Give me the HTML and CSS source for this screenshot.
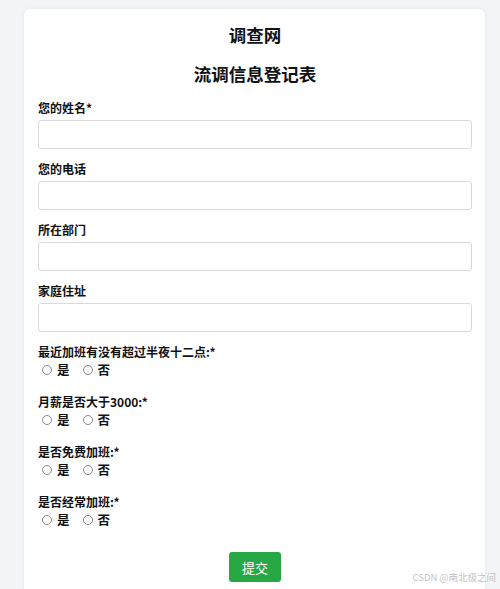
FILE: index.html
```html
<!DOCTYPE html>
<html lang="zh-CN">
<head>
<meta charset="utf-8">
<title>流调信息登记表</title>
<link rel="stylesheet" href="styles.css">
</head>
<body>
<div class="card">
  <h1 class="site">调查网</h1>
  <h2 class="form-title">流调信息登记表</h2>
  <form class="form">
    <div class="field">
      <label class="label">您的姓名*</label>
      <input class="text-input" type="text">
    </div>
    <div class="field">
      <label class="label">您的电话</label>
      <input class="text-input" type="text">
    </div>
    <div class="field">
      <label class="label">所在部门</label>
      <input class="text-input" type="text">
    </div>
    <div class="field">
      <label class="label">家庭住址</label>
      <input class="text-input" type="text">
    </div>
    <div class="question">
      <div class="label">最近加班有没有超过半夜十二点:*</div>
      <div class="options">
        <label class="option"><input class="radio" type="radio" name="q1">是</label>
        <label class="option"><input class="radio" type="radio" name="q1">否</label>
      </div>
    </div>
    <div class="question">
      <div class="label">月薪是否大于3000:*</div>
      <div class="options">
        <label class="option"><input class="radio" type="radio" name="q2">是</label>
        <label class="option"><input class="radio" type="radio" name="q2">否</label>
      </div>
    </div>
    <div class="question">
      <div class="label">是否免费加班:*</div>
      <div class="options">
        <label class="option"><input class="radio" type="radio" name="q3">是</label>
        <label class="option"><input class="radio" type="radio" name="q3">否</label>
      </div>
    </div>
    <div class="question">
      <div class="label">是否经常加班:*</div>
      <div class="options">
        <label class="option"><input class="radio" type="radio" name="q4">是</label>
        <label class="option"><input class="radio" type="radio" name="q4">否</label>
      </div>
    </div>
    <div class="actions">
      <button class="submit" type="button">提交</button>
    </div>
  </form>
</div>
<div class="watermark">CSDN @南北极之间</div>
</body>
</html>
```

FILE: styles.css
```css
html, body {
  margin: 0;
  padding: 0;
}
body {
  background: #f2f4f7;
  font-family: "Noto Sans CJK SC", "Noto Sans", sans-serif;
  color: #111;
  height: 589px;
  overflow: hidden;
  position: relative;
}
.card {
  margin: 9px 0 0 24px;
  width: 461px;
  height: 600px;
  box-sizing: border-box;
  background: #fff;
  border-radius: 6px;
  box-shadow: 0 0 4px rgba(0, 0, 0, 0.06);
  padding: 14px 13px 0 14px;
}
.site, .form-title {
  margin: 0;
  text-align: center;
  font-size: 17.5px;
  line-height: 24px;
  font-weight: 700;
}
.form-title {
  margin-top: 15px;
}
.form {
  margin-top: 13px;
  display: flex;
  flex-direction: column;
}
.field {
  display: flex;
  flex-direction: column;
  margin-bottom: 11px;
}
.label {
  display: block;
  font-size: 12px;
  line-height: 18px;
  font-weight: 700;
  color: #111;
}
.text-input {
  margin-top: 3px;
  height: 29px;
  box-sizing: border-box;
  border: 1px solid #d9d9d9;
  border-radius: 3px;
  background: #fff;
  padding: 0 8px;
  outline: none;
}
.question {
  margin-bottom: 14px;
}
.options {
  display: flex;
  height: 18px;
  align-items: center;
  padding-left: 3px;
}
.option {
  display: flex;
  align-items: center;
  font-size: 12.5px;
  font-weight: 700;
  line-height: 18px;
  margin-right: 12px;
}
.radio {
  appearance: none;
  -webkit-appearance: none;
  width: 10px;
  height: 10px;
  margin: 0 5px 0 1px;
  border: 1px solid #8a8a8a;
  border-radius: 50%;
  background: #fff;
  box-sizing: border-box;
}
.actions {
  display: flex;
  justify-content: center;
  margin-top: 9px;
}
.submit {
  width: 52px;
  height: 30px;
  border: none;
  border-radius: 3px;
  background: #28a745;
  color: #fff;
  font-family: "Noto Sans CJK SC", sans-serif;
  font-size: 13px;
  padding: 0;
}
.watermark {
  position: absolute;
  right: 4px;
  bottom: 5px;
  font-size: 9.5px;
  color: #c2c2c2;
  font-family: "Noto Sans CJK SC", sans-serif;
}
```
